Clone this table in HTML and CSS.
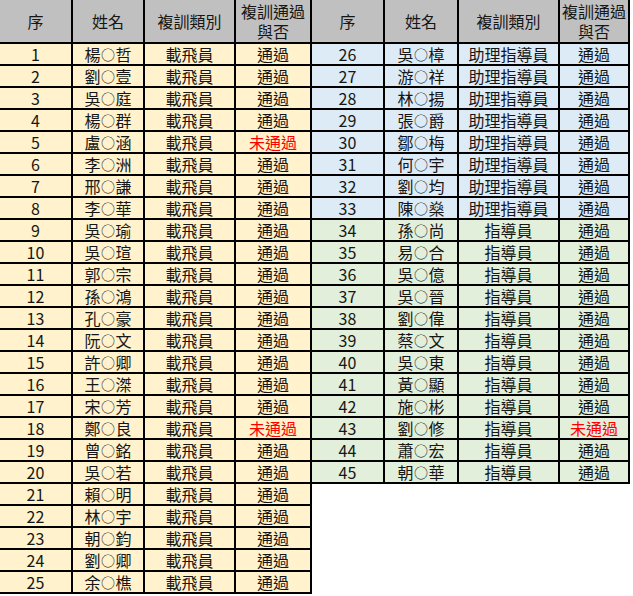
FILE: index.html
```html
<!DOCTYPE html>
<html lang="zh-Hant">
<head>
<meta charset="utf-8">
<title>複訓名單</title>
<link rel="stylesheet" href="styles.css">
</head>
<body>
<div class="sheet">
  <div class="tbl left">
    <div class="row hd"><div class="c">序</div><div class="c">姓名</div><div class="c">複訓類別</div><div class="c two"><span class="ln">複訓通過</span><span class="ln">與否</span></div></div>
    <div class="row y"><div class="c">1</div><div class="c">楊<span class="o">○</span>哲</div><div class="c">載飛員</div><div class="c">通過</div></div>
    <div class="row y"><div class="c">2</div><div class="c">劉<span class="o">○</span>壹</div><div class="c">載飛員</div><div class="c">通過</div></div>
    <div class="row y"><div class="c">3</div><div class="c">吳<span class="o">○</span>庭</div><div class="c">載飛員</div><div class="c">通過</div></div>
    <div class="row y"><div class="c">4</div><div class="c">楊<span class="o">○</span>群</div><div class="c">載飛員</div><div class="c">通過</div></div>
    <div class="row y"><div class="c">5</div><div class="c">盧<span class="o">○</span>涵</div><div class="c">載飛員</div><div class="c no">未通過</div></div>
    <div class="row y"><div class="c">6</div><div class="c">李<span class="o">○</span>洲</div><div class="c">載飛員</div><div class="c">通過</div></div>
    <div class="row y"><div class="c">7</div><div class="c">邢<span class="o">○</span>謙</div><div class="c">載飛員</div><div class="c">通過</div></div>
    <div class="row y"><div class="c">8</div><div class="c">李<span class="o">○</span>華</div><div class="c">載飛員</div><div class="c">通過</div></div>
    <div class="row y"><div class="c">9</div><div class="c">吳<span class="o">○</span>瑜</div><div class="c">載飛員</div><div class="c">通過</div></div>
    <div class="row y"><div class="c">10</div><div class="c">吳<span class="o">○</span>瑄</div><div class="c">載飛員</div><div class="c">通過</div></div>
    <div class="row y"><div class="c">11</div><div class="c">郭<span class="o">○</span>宗</div><div class="c">載飛員</div><div class="c">通過</div></div>
    <div class="row y"><div class="c">12</div><div class="c">孫<span class="o">○</span>鴻</div><div class="c">載飛員</div><div class="c">通過</div></div>
    <div class="row y"><div class="c">13</div><div class="c">孔<span class="o">○</span>豪</div><div class="c">載飛員</div><div class="c">通過</div></div>
    <div class="row y"><div class="c">14</div><div class="c">阮<span class="o">○</span>文</div><div class="c">載飛員</div><div class="c">通過</div></div>
    <div class="row y"><div class="c">15</div><div class="c">許<span class="o">○</span>卿</div><div class="c">載飛員</div><div class="c">通過</div></div>
    <div class="row y"><div class="c">16</div><div class="c">王<span class="o">○</span>滐</div><div class="c">載飛員</div><div class="c">通過</div></div>
    <div class="row y"><div class="c">17</div><div class="c">宋<span class="o">○</span>芳</div><div class="c">載飛員</div><div class="c">通過</div></div>
    <div class="row y"><div class="c">18</div><div class="c">鄭<span class="o">○</span>良</div><div class="c">載飛員</div><div class="c no">未通過</div></div>
    <div class="row y"><div class="c">19</div><div class="c">曾<span class="o">○</span>銘</div><div class="c">載飛員</div><div class="c">通過</div></div>
    <div class="row y"><div class="c">20</div><div class="c">吳<span class="o">○</span>若</div><div class="c">載飛員</div><div class="c">通過</div></div>
    <div class="row y"><div class="c">21</div><div class="c">賴<span class="o">○</span>明</div><div class="c">載飛員</div><div class="c">通過</div></div>
    <div class="row y"><div class="c">22</div><div class="c">林<span class="o">○</span>宇</div><div class="c">載飛員</div><div class="c">通過</div></div>
    <div class="row y"><div class="c">23</div><div class="c">朝<span class="o">○</span>鈞</div><div class="c">載飛員</div><div class="c">通過</div></div>
    <div class="row y"><div class="c">24</div><div class="c">劉<span class="o">○</span>卿</div><div class="c">載飛員</div><div class="c">通過</div></div>
    <div class="row y"><div class="c">25</div><div class="c">余<span class="o">○</span>樵</div><div class="c">載飛員</div><div class="c">通過</div></div>
  </div>
  <div class="tbl right">
    <div class="row hd"><div class="c">序</div><div class="c">姓名</div><div class="c">複訓類別</div><div class="c two"><span class="ln">複訓通過</span><span class="ln">與否</span></div></div>
    <div class="row b"><div class="c">26</div><div class="c">吳<span class="o">○</span>樟</div><div class="c">助理指導員</div><div class="c">通過</div></div>
    <div class="row b"><div class="c">27</div><div class="c">游<span class="o">○</span>祥</div><div class="c">助理指導員</div><div class="c">通過</div></div>
    <div class="row b"><div class="c">28</div><div class="c">林<span class="o">○</span>揚</div><div class="c">助理指導員</div><div class="c">通過</div></div>
    <div class="row b"><div class="c">29</div><div class="c">張<span class="o">○</span>爵</div><div class="c">助理指導員</div><div class="c">通過</div></div>
    <div class="row b"><div class="c">30</div><div class="c">鄒<span class="o">○</span>梅</div><div class="c">助理指導員</div><div class="c">通過</div></div>
    <div class="row b"><div class="c">31</div><div class="c">何<span class="o">○</span>宇</div><div class="c">助理指導員</div><div class="c">通過</div></div>
    <div class="row b"><div class="c">32</div><div class="c">劉<span class="o">○</span>均</div><div class="c">助理指導員</div><div class="c">通過</div></div>
    <div class="row b"><div class="c">33</div><div class="c">陳<span class="o">○</span>燊</div><div class="c">助理指導員</div><div class="c">通過</div></div>
    <div class="row g"><div class="c">34</div><div class="c">孫<span class="o">○</span>尚</div><div class="c">指導員</div><div class="c">通過</div></div>
    <div class="row g"><div class="c">35</div><div class="c">易<span class="o">○</span>合</div><div class="c">指導員</div><div class="c">通過</div></div>
    <div class="row g"><div class="c">36</div><div class="c">吳<span class="o">○</span>億</div><div class="c">指導員</div><div class="c">通過</div></div>
    <div class="row g"><div class="c">37</div><div class="c">吳<span class="o">○</span>晉</div><div class="c">指導員</div><div class="c">通過</div></div>
    <div class="row g"><div class="c">38</div><div class="c">劉<span class="o">○</span>偉</div><div class="c">指導員</div><div class="c">通過</div></div>
    <div class="row g"><div class="c">39</div><div class="c">蔡<span class="o">○</span>文</div><div class="c">指導員</div><div class="c">通過</div></div>
    <div class="row g"><div class="c">40</div><div class="c">吳<span class="o">○</span>東</div><div class="c">指導員</div><div class="c">通過</div></div>
    <div class="row g"><div class="c">41</div><div class="c">黃<span class="o">○</span>顯</div><div class="c">指導員</div><div class="c">通過</div></div>
    <div class="row g"><div class="c">42</div><div class="c">施<span class="o">○</span>彬</div><div class="c">指導員</div><div class="c">通過</div></div>
    <div class="row g"><div class="c">43</div><div class="c">劉<span class="o">○</span>修</div><div class="c">指導員</div><div class="c no">未通過</div></div>
    <div class="row g"><div class="c">44</div><div class="c">蕭<span class="o">○</span>宏</div><div class="c">指導員</div><div class="c">通過</div></div>
    <div class="row g"><div class="c">45</div><div class="c">朝<span class="o">○</span>華</div><div class="c">指導員</div><div class="c">通過</div></div>
  </div>
</div>
</body>
</html>
```
FILE: styles.css
```css
html, body {
  margin: 0;
  padding: 0;
  background: #ffffff;
}
body {
  font-family: "Noto Sans CJK TC", "Noto Sans", sans-serif;
  font-size: 16px;
  color: #161616;
}
.sheet {
  display: flex;
  align-items: flex-start;
  width: 633px;
}
.tbl {
  display: grid;
}
.left {
  grid-template-columns: 73px 72px 91px 76px;
}
.right {
  grid-template-columns: 73px 74px 101px 70px;
}
.row {
  display: contents;
}
.c {
  box-sizing: border-box;
  height: 22px;
  border-right: 2px solid #000;
  border-bottom: 2px solid #000;
  display: flex;
  align-items: center;
  justify-content: center;
  text-align: center;
  line-height: 20px;
  white-space: nowrap;
}
.c.two {
  flex-direction: column;
  gap: 2px;
}
.ln {
  display: block;
  height: 18px;
  line-height: 18px;
}
.o {
  font-size: 14px;
  line-height: 20px;
  margin: 0 0.5px;
  color: #222;
}
.hd .c {
  height: 44px;
  background: #c0c0c0;
}
.y .c { background: #fff2cc; }
.b .c { background: #ddebf7; }
.g .c { background: #e2efda; }
.c.no { color: #ff0000; }
```
